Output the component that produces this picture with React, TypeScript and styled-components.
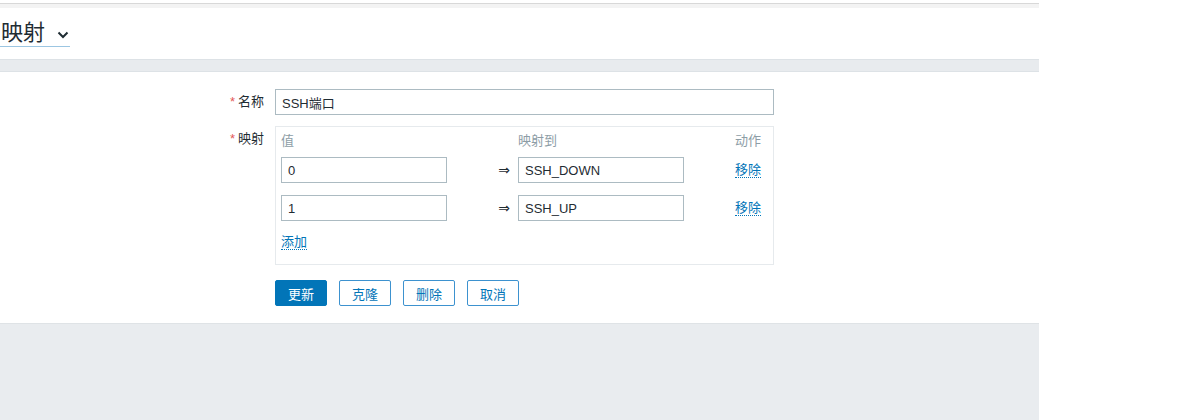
import React from "react";
import styled, { createGlobalStyle } from "styled-components";

const GlobalStyle = createGlobalStyle`
  html, body { margin: 0; padding: 0; background: #ffffff; }
  body {
    font-family: "Liberation Sans", Arial, "Noto Sans CJK SC", sans-serif;
    font-size: 13px;
    color: #1f2c33;
  }
  * { box-sizing: border-box; }
`;

const Page = styled.div`
  width: 1039px;
  height: 420px;
  display: flex;
  flex-direction: column;
  padding-top: 3px;
`;

const TopStrip = styled.div`
  height: 5px;
  border-top: 1px solid #d8d8d8;
  background: #f3f3f3;
`;

const Header = styled.header`
  height: 51px;
  display: flex;
  align-items: flex-start;
  padding-top: 12px;
  background: #ffffff;
`;

const Title = styled.h1`
  margin: 0;
  display: flex;
  align-items: center;
  gap: 12px;
  font-size: 22px;
  font-weight: normal;
  line-height: 26px;
  color: #1f2c33;
  padding-left: 1px;
  border-bottom: 1px solid #9cc6e2;
`;

const Chevron = styled.svg`
  width: 12px;
  height: 8px;
  margin-right: 1px;
  margin-top: 4px;
`;

const Band = styled.div`
  height: 13px;
  background: #e8ebee;
  border-top: 1px solid #dde2e6;
  border-bottom: 1px solid #dde2e6;
`;

const Form = styled.form`
  background: #ffffff;
  padding: 17px 0 17px;
  display: flex;
  flex-direction: column;
`;

const FormRow = styled.div<{ $gap?: number }>`
  display: flex;
  align-items: flex-start;
  margin-top: ${(p) => p.$gap ?? 0}px;
`;

const Label = styled.label`
  width: 264px;
  margin-right: 11px;
  text-align: right;
  line-height: 26px;
  color: #1f2c33;
  white-space: nowrap;
`;

const Star = styled.span`
  color: #e45959;
  margin-right: 3px;
`;

const TextInput = styled.input<{ $w?: number }>`
  width: ${(p) => p.$w ?? 499}px;
  height: 26px;
  border: 1px solid #acbbc2;
  border-radius: 0;
  padding: 0 6px;
  font-family: inherit;
  font-size: 13px;
  color: #1f2c33;
  background: #ffffff;
  outline: none;
`;

const MapBox = styled.div`
  width: 499px;
  height: 139px;
  border: 1px solid #e6eaed;
  padding: 5px;
`;

const Cols = styled.div`
  display: grid;
  grid-template-columns: 166px 71px 166px 1fr;
  align-items: center;
`;

const HeadRow = styled(Cols)`
  height: 18px;
  margin-bottom: 7px;
  color: #8d9da6;
  line-height: 18px;
`;

const Rows = styled.div`
  display: flex;
  flex-direction: column;
  gap: 12px;
`;

const ActionCell = styled.div`
  padding-left: 51px;
`;

const Arrow = styled.div`
  text-align: right;
  padding-right: 8px;
  font-family: "DejaVu Sans", sans-serif;
  font-size: 14px;
  color: #1f2c33;
`;

const Link = styled.a`
  display: inline-block;
  color: #0275b8;
  line-height: 15px;
  text-decoration: none;
  border-bottom: 1px dotted #0275b8;
  cursor: pointer;
`;

const AddRow = styled.div`
  margin-top: 12px;
  height: 18px;
  display: flex;
  align-items: center;
`;

const Buttons = styled.div`
  display: flex;
  gap: 12px;
`;

const Button = styled.button<{ $primary?: boolean }>`
  width: 52px;
  height: 26px;
  border-radius: 2px;
  font-family: inherit;
  font-size: 13px;
  padding: 0;
  cursor: pointer;
  border: 1px solid ${(p) => (p.$primary ? "#0275b8" : "#3d92cf")};
  background: ${(p) => (p.$primary ? "#0275b8" : "#ffffff")};
  color: ${(p) => (p.$primary ? "#ffffff" : "#0275b8")};
`;

const Footer = styled.div`
  flex: 1;
  background: #e9ecef;
  border-top: 1px solid #dfe3e6;
`;

const mappings = [
  { value: "0", to: "SSH_DOWN" },
  { value: "1", to: "SSH_UP" },
];

export default function App() {
  return (
    <>
      <GlobalStyle />
      <Page>
        <TopStrip />
        <Header>
          <Title>
            映射
            <Chevron viewBox="0 0 12 8">
              <path d="M1.5 1.5 L6 6 L10.5 1.5" fill="none" stroke="#1f2c33" strokeWidth="2" />
            </Chevron>
          </Title>
        </Header>
        <Band />
        <Form onSubmit={(e) => e.preventDefault()}>
          <FormRow>
            <Label>
              <Star>*</Star>名称
            </Label>
            <TextInput defaultValue="SSH端口" />
          </FormRow>
          <FormRow $gap={11}>
            <Label>
              <Star>*</Star>映射
            </Label>
            <MapBox>
              <HeadRow>
                <div>值</div>
                <div />
                <div>映射到</div>
                <ActionCell>动作</ActionCell>
              </HeadRow>
              <Rows>
                {mappings.map((m) => (
                  <Cols key={m.value}>
                    <TextInput $w={166} defaultValue={m.value} />
                    <Arrow>⇒</Arrow>
                    <TextInput $w={166} defaultValue={m.to} />
                    <ActionCell>
                      <Link>移除</Link>
                    </ActionCell>
                  </Cols>
                ))}
              </Rows>
              <AddRow>
                <Link>添加</Link>
              </AddRow>
            </MapBox>
          </FormRow>
          <FormRow $gap={15}>
            <Label />
            <Buttons>
              <Button $primary>更新</Button>
              <Button>克隆</Button>
              <Button>删除</Button>
              <Button>取消</Button>
            </Buttons>
          </FormRow>
        </Form>
        <Footer />
      </Page>
    </>
  );
}
